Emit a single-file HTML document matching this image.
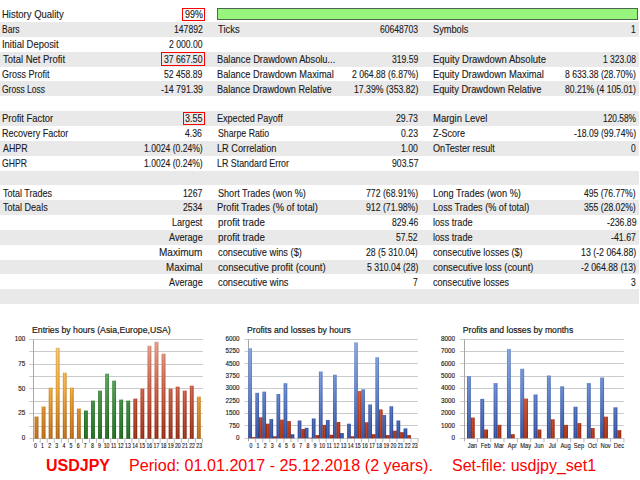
<!DOCTYPE html>
<html><head><meta charset="utf-8"><style>
html,body{margin:0;padding:0;background:#fff;}
body{width:640px;height:480px;overflow:hidden;position:relative;font-family:"Liberation Sans",sans-serif;color:#1b1b1b;}
.band{position:absolute;left:0;width:639px;background:#e9e9e9;}
.t{position:absolute;white-space:nowrap;font-size:10.2px;line-height:14.85px;height:14.85px;margin-top:1.2px;-webkit-text-stroke:0.12px #1b1b1b;}
.t{transform-origin:0 50%;}
/* 0.912 0.833 */
.box{position:absolute;border:1px solid #f00;box-sizing:border-box;}
.hq{position:absolute;left:217px;top:8.4px;width:421px;height:12px;background:#97f57e;border:1px solid #4d664d;box-sizing:border-box;}
.bot{position:absolute;top:456px;transform-origin:0 50%;font-size:15.6px;line-height:20px;color:#f00;white-space:nowrap;}
</style></head><body>

<div class="band" style="top:22.00px;height:14.85px"></div>
<div class="band" style="top:51.70px;height:14.85px"></div>
<div class="band" style="top:81.40px;height:14.85px"></div>
<div class="band" style="top:111.10px;height:14.85px"></div>
<div class="band" style="top:140.80px;height:14.85px"></div>
<div class="band" style="top:170.50px;height:14.85px"></div>
<div class="band" style="top:200.20px;height:14.85px"></div>
<div class="band" style="top:229.90px;height:14.85px"></div>
<div class="band" style="top:259.60px;height:14.85px"></div>
<div class="band" style="top:289.30px;height:14.85px"></div>
<div class="box" style="left:182px;top:8px;width:23px;height:13px"></div>
<div class="box" style="left:161px;top:52px;width:44px;height:14px"></div>
<div class="box" style="left:183px;top:112px;width:22px;height:13px"></div>
<div class="hq"></div>
<div class="t" style="left:2.04px;top:7.15px;transform:scaleX(0.9315)">History Quality</div>
<div class="t" style="left:2.12px;top:22.00px;transform:scaleX(0.8338)">Bars</div>
<div class="t" style="left:1.95px;top:36.85px;transform:scaleX(0.9248)">Initial Deposit</div>
<div class="t" style="left:2.61px;top:51.70px;transform:scaleX(0.9293)">Total Net Profit</div>
<div class="t" style="left:2.35px;top:66.55px;transform:scaleX(0.8809)">Gross Profit</div>
<div class="t" style="left:2.38px;top:81.40px;transform:scaleX(0.8324)">Gross Loss</div>
<div class="t" style="left:2.05px;top:111.10px;transform:scaleX(0.9236)">Profit Factor</div>
<div class="t" style="left:2.08px;top:125.95px;transform:scaleX(0.8870)">Recovery Factor</div>
<div class="t" style="left:2.80px;top:140.80px;transform:scaleX(0.8655)">AHPR</div>
<div class="t" style="left:2.37px;top:155.65px;transform:scaleX(0.8469)">GHPR</div>
<div class="t" style="left:2.62px;top:185.35px;transform:scaleX(0.8840)">Total Trades</div>
<div class="t" style="left:2.62px;top:200.20px;transform:scaleX(0.8862)">Total Deals</div>
<div class="t" style="left:184.60px;top:7.15px;transform:scaleX(0.8783)">99%</div>
<div class="t" style="left:173.85px;top:22.00px;transform:scaleX(0.8460)">147892</div>
<div class="t" style="left:168.97px;top:36.85px;transform:scaleX(0.8451)">2 000.00</div>
<div class="t" style="left:163.95px;top:51.70px;transform:scaleX(0.8493)">37 667.50</div>
<div class="t" style="left:164.36px;top:66.55px;transform:scaleX(0.8423)">52 458.89</div>
<div class="t" style="left:160.60px;top:81.40px;transform:scaleX(0.8612)">-14 791.39</div>
<div class="t" style="left:184.74px;top:111.10px;transform:scaleX(0.8779)">3.55</div>
<div class="t" style="left:185.23px;top:125.95px;transform:scaleX(0.8530)">4.36</div>
<div class="t" style="left:143.56px;top:140.80px;transform:scaleX(0.8428)">1.0024 (0.24%)</div>
<div class="t" style="left:143.56px;top:155.65px;transform:scaleX(0.8428)">1.0024 (0.24%)</div>
<div class="t" style="left:182.95px;top:185.35px;transform:scaleX(0.8497)">1267</div>
<div class="t" style="left:182.77px;top:200.20px;transform:scaleX(0.8501)">2534</div>
<div class="t" style="left:171.77px;top:215.05px;transform:scaleX(0.8899)">Largest</div>
<div class="t" style="left:168.70px;top:229.90px;transform:scaleX(0.8920)">Average</div>
<div class="t" style="left:159.20px;top:244.75px;transform:scaleX(0.9827)">Maximum</div>
<div class="t" style="left:166.22px;top:259.60px;transform:scaleX(0.9598)">Maximal</div>
<div class="t" style="left:168.70px;top:274.45px;transform:scaleX(0.8920)">Average</div>
<div class="t" style="left:218.01px;top:22.00px;transform:scaleX(0.9235)">Ticks</div>
<div class="t" style="left:217.46px;top:51.70px;transform:scaleX(0.9121)">Balance Drawdown Absolu...</div>
<div class="t" style="left:217.46px;top:66.55px;transform:scaleX(0.9088)">Balance Drawdown Maximal</div>
<div class="t" style="left:217.47px;top:81.40px;transform:scaleX(0.8996)">Balance Drawdown Relative</div>
<div class="t" style="left:217.48px;top:111.10px;transform:scaleX(0.8883)">Expected Payoff</div>
<div class="t" style="left:217.81px;top:125.95px;transform:scaleX(0.8593)">Sharpe Ratio</div>
<div class="t" style="left:217.46px;top:140.80px;transform:scaleX(0.9041)">LR Correlation</div>
<div class="t" style="left:217.49px;top:155.65px;transform:scaleX(0.8709)">LR Standard Error</div>
<div class="t" style="left:217.79px;top:185.35px;transform:scaleX(0.8917)">Short Trades (won %)</div>
<div class="t" style="left:217.45px;top:200.20px;transform:scaleX(0.9177)">Profit Trades (% of total)</div>
<div class="t" style="left:217.56px;top:215.05px;transform:scaleX(0.9615)">profit trade</div>
<div class="t" style="left:217.56px;top:229.90px;transform:scaleX(0.9615)">profit trade</div>
<div class="t" style="left:217.83px;top:244.75px;transform:scaleX(0.9087)">consecutive wins ($)</div>
<div class="t" style="left:217.81px;top:259.60px;transform:scaleX(0.9459)">consecutive profit (count)</div>
<div class="t" style="left:217.83px;top:274.45px;transform:scaleX(0.9156)">consecutive wins</div>
<div class="t" style="left:379.67px;top:22.00px;transform:scaleX(0.8410)">60648703</div>
<div class="t" style="left:391.56px;top:51.70px;transform:scaleX(0.8436)">319.59</div>
<div class="t" style="left:351.57px;top:66.55px;transform:scaleX(0.8494)">2 064.88 (6.87%)</div>
<div class="t" style="left:353.65px;top:81.40px;transform:scaleX(0.8540)">17.39% (353.82)</div>
<div class="t" style="left:396.06px;top:111.10px;transform:scaleX(0.8584)">29.73</div>
<div class="t" style="left:400.95px;top:125.95px;transform:scaleX(0.8569)">0.23</div>
<div class="t" style="left:401.05px;top:140.80px;transform:scaleX(0.8495)">1.00</div>
<div class="t" style="left:391.51px;top:155.65px;transform:scaleX(0.8498)">903.57</div>
<div class="t" style="left:365.86px;top:185.35px;transform:scaleX(0.8539)">772 (68.91%)</div>
<div class="t" style="left:365.91px;top:200.20px;transform:scaleX(0.8532)">912 (71.98%)</div>
<div class="t" style="left:391.61px;top:215.05px;transform:scaleX(0.8403)">829.46</div>
<div class="t" style="left:396.35px;top:229.90px;transform:scaleX(0.8461)">57.52</div>
<div class="t" style="left:366.26px;top:244.75px;transform:scaleX(0.8535)">28 (5 310.04)</div>
<div class="t" style="left:366.65px;top:259.60px;transform:scaleX(0.8470)">5 310.04 (28)</div>
<div class="t" style="left:413.21px;top:274.45px;transform:scaleX(0.8330)">7</div>
<div class="t" style="left:433.08px;top:22.00px;transform:scaleX(0.9060)">Symbols</div>
<div class="t" style="left:432.74px;top:51.70px;transform:scaleX(0.9321)">Equity Drawdown Absolute</div>
<div class="t" style="left:432.75px;top:66.55px;transform:scaleX(0.9244)">Equity Drawdown Maximal</div>
<div class="t" style="left:432.76px;top:81.40px;transform:scaleX(0.9112)">Equity Drawdown Relative</div>
<div class="t" style="left:432.74px;top:111.10px;transform:scaleX(0.9312)">Margin Level</div>
<div class="t" style="left:433.23px;top:125.95px;transform:scaleX(0.8874)">Z-Score</div>
<div class="t" style="left:433.09px;top:140.80px;transform:scaleX(0.8959)">OnTester result</div>
<div class="t" style="left:432.76px;top:185.35px;transform:scaleX(0.9081)">Long Trades (won %)</div>
<div class="t" style="left:432.77px;top:200.20px;transform:scaleX(0.8943)">Loss Trades (% of total)</div>
<div class="t" style="left:432.91px;top:215.05px;transform:scaleX(0.8957)">loss trade</div>
<div class="t" style="left:432.91px;top:229.90px;transform:scaleX(0.8957)">loss trade</div>
<div class="t" style="left:433.14px;top:244.75px;transform:scaleX(0.8893)">consecutive losses ($)</div>
<div class="t" style="left:433.13px;top:259.60px;transform:scaleX(0.9190)">consecutive loss (count)</div>
<div class="t" style="left:433.14px;top:274.45px;transform:scaleX(0.8897)">consecutive losses</div>
<div class="t" style="left:631.27px;top:22.00px;transform:scaleX(0.8330)">1</div>
<div class="t" style="left:603.06px;top:51.70px;transform:scaleX(0.8337)">1 323.08</div>
<div class="t" style="left:565.41px;top:66.55px;transform:scaleX(0.8452)">8 633.38 (28.70%)</div>
<div class="t" style="left:565.41px;top:81.40px;transform:scaleX(0.8452)">80.21% (4 105.01)</div>
<div class="t" style="left:602.57px;top:111.10px;transform:scaleX(0.8195)">120.58%</div>
<div class="t" style="left:573.71px;top:125.95px;transform:scaleX(0.8493)">-18.09 (99.74%)</div>
<div class="t" style="left:630.88px;top:140.80px;transform:scaleX(0.8330)">0</div>
<div class="t" style="left:584.23px;top:185.35px;transform:scaleX(0.8429)">495 (76.77%)</div>
<div class="t" style="left:584.05px;top:200.20px;transform:scaleX(0.8458)">355 (28.02%)</div>
<div class="t" style="left:606.61px;top:215.05px;transform:scaleX(0.8556)">-236.89</div>
<div class="t" style="left:611.30px;top:229.90px;transform:scaleX(0.8623)">-41.67</div>
<div class="t" style="left:581.04px;top:244.75px;transform:scaleX(0.8631)">13 (-2 064.88)</div>
<div class="t" style="left:581.31px;top:259.60px;transform:scaleX(0.8589)">-2 064.88 (13)</div>
<div class="t" style="left:631.42px;top:274.45px;transform:scaleX(0.8330)">3</div>
<svg width="640" height="480" style="position:absolute;left:0;top:0">
<defs>
<linearGradient id="gO" gradientUnits="userSpaceOnUse" x1="0" y1="338" x2="0" y2="439"><stop offset="0" stop-color="#fcc86a"/><stop offset="0.5" stop-color="#f2a42c"/><stop offset="1" stop-color="#bc6204"/></linearGradient>
<linearGradient id="gG" gradientUnits="userSpaceOnUse" x1="0" y1="338" x2="0" y2="439"><stop offset="0" stop-color="#7cc47c"/><stop offset="0.4" stop-color="#4a9e4a"/><stop offset="1" stop-color="#0e640e"/></linearGradient>
<linearGradient id="gR" gradientUnits="userSpaceOnUse" x1="0" y1="338" x2="0" y2="439"><stop offset="0" stop-color="#f0a08a"/><stop offset="0.5" stop-color="#cc5438"/><stop offset="1" stop-color="#961e02"/></linearGradient>
<linearGradient id="gB" gradientUnits="userSpaceOnUse" x1="0" y1="338" x2="0" y2="439"><stop offset="0" stop-color="#8aa9e8"/><stop offset="0.5" stop-color="#5a80d0"/><stop offset="1" stop-color="#24459e"/></linearGradient>
<linearGradient id="gL" gradientUnits="userSpaceOnUse" x1="0" y1="338" x2="0" y2="439"><stop offset="0" stop-color="#f48460"/><stop offset="0.5" stop-color="#d8502a"/><stop offset="1" stop-color="#a82000"/></linearGradient>
<linearGradient id="hE" x1="0" y1="0" x2="1" y2="0"><stop offset="0" stop-color="#000" stop-opacity=".10"/><stop offset="0.45" stop-color="#fff" stop-opacity=".14"/><stop offset="1" stop-color="#000" stop-opacity=".16"/></linearGradient>
</defs>
<line x1="29.10" y1="339.50" x2="202.90" y2="339.50" stroke="#c9cbcd" stroke-width="1.05"/>
<line x1="29.10" y1="351.50" x2="202.90" y2="351.50" stroke="#c9cbcd" stroke-width="1.05"/>
<line x1="29.10" y1="364.50" x2="202.90" y2="364.50" stroke="#c9cbcd" stroke-width="1.05"/>
<line x1="29.10" y1="376.50" x2="202.90" y2="376.50" stroke="#c9cbcd" stroke-width="1.05"/>
<line x1="29.10" y1="388.50" x2="202.90" y2="388.50" stroke="#c9cbcd" stroke-width="1.05"/>
<line x1="29.10" y1="401.50" x2="202.90" y2="401.50" stroke="#c9cbcd" stroke-width="1.05"/>
<line x1="29.10" y1="413.50" x2="202.90" y2="413.50" stroke="#c9cbcd" stroke-width="1.05"/>
<line x1="29.10" y1="426.50" x2="202.90" y2="426.50" stroke="#c9cbcd" stroke-width="1.05"/>
<line x1="29.10" y1="438.50" x2="202.90" y2="438.50" stroke="#c9cbcd" stroke-width="1.05"/>
<line x1="33.50" y1="339.50" x2="33.50" y2="441.80" stroke="#a8a8a8" stroke-width="1"/>
<rect x="34.60" y="416.57" width="3.8" height="22.23" fill="url(#gO)"/>
<rect x="34.60" y="416.57" width="3.8" height="22.23" fill="url(#hE)"/>
<line x1="40.16" y1="438.80" x2="40.16" y2="442.80" stroke="#a9a9a9" stroke-width="0.8"/>
<text transform="translate(35.40 447.60) scale(0.760 1)" font-size="6.80" text-anchor="middle" fill="#1a1a1a" font-family="Liberation Sans" font-weight="normal" stroke="#1a1a1a" stroke-width="0.15">0</text>
<rect x="41.66" y="406.60" width="3.8" height="32.20" fill="url(#gO)"/>
<rect x="41.66" y="406.60" width="3.8" height="32.20" fill="url(#hE)"/>
<line x1="47.21" y1="438.80" x2="47.21" y2="442.80" stroke="#a9a9a9" stroke-width="0.8"/>
<text transform="translate(42.52 447.60) scale(0.760 1)" font-size="6.80" text-anchor="middle" fill="#1a1a1a" font-family="Liberation Sans" font-weight="normal" stroke="#1a1a1a" stroke-width="0.15">1</text>
<rect x="48.71" y="387.65" width="3.8" height="51.15" fill="url(#gO)"/>
<rect x="48.71" y="387.65" width="3.8" height="51.15" fill="url(#hE)"/>
<line x1="54.27" y1="438.80" x2="54.27" y2="442.80" stroke="#a9a9a9" stroke-width="0.8"/>
<text transform="translate(49.64 447.60) scale(0.760 1)" font-size="6.80" text-anchor="middle" fill="#1a1a1a" font-family="Liberation Sans" font-weight="normal" stroke="#1a1a1a" stroke-width="0.15">2</text>
<rect x="55.77" y="347.77" width="3.8" height="91.03" fill="url(#gO)"/>
<rect x="55.77" y="347.77" width="3.8" height="91.03" fill="url(#hE)"/>
<line x1="61.33" y1="438.80" x2="61.33" y2="442.80" stroke="#a9a9a9" stroke-width="0.8"/>
<text transform="translate(56.76 447.60) scale(0.760 1)" font-size="6.80" text-anchor="middle" fill="#1a1a1a" font-family="Liberation Sans" font-weight="normal" stroke="#1a1a1a" stroke-width="0.15">3</text>
<rect x="62.83" y="372.70" width="3.8" height="66.10" fill="url(#gO)"/>
<rect x="62.83" y="372.70" width="3.8" height="66.10" fill="url(#hE)"/>
<line x1="68.39" y1="438.80" x2="68.39" y2="442.80" stroke="#a9a9a9" stroke-width="0.8"/>
<text transform="translate(63.88 447.60) scale(0.760 1)" font-size="6.80" text-anchor="middle" fill="#1a1a1a" font-family="Liberation Sans" font-weight="normal" stroke="#1a1a1a" stroke-width="0.15">4</text>
<rect x="69.89" y="387.65" width="3.8" height="51.15" fill="url(#gO)"/>
<rect x="69.89" y="387.65" width="3.8" height="51.15" fill="url(#hE)"/>
<line x1="75.44" y1="438.80" x2="75.44" y2="442.80" stroke="#a9a9a9" stroke-width="0.8"/>
<text transform="translate(71.00 447.60) scale(0.760 1)" font-size="6.80" text-anchor="middle" fill="#1a1a1a" font-family="Liberation Sans" font-weight="normal" stroke="#1a1a1a" stroke-width="0.15">5</text>
<rect x="76.94" y="408.59" width="3.8" height="30.21" fill="url(#gO)"/>
<rect x="76.94" y="408.59" width="3.8" height="30.21" fill="url(#hE)"/>
<line x1="82.50" y1="438.80" x2="82.50" y2="442.80" stroke="#a9a9a9" stroke-width="0.8"/>
<text transform="translate(78.12 447.60) scale(0.760 1)" font-size="6.80" text-anchor="middle" fill="#1a1a1a" font-family="Liberation Sans" font-weight="normal" stroke="#1a1a1a" stroke-width="0.15">6</text>
<rect x="84.00" y="410.58" width="3.8" height="28.22" fill="url(#gG)"/>
<rect x="84.00" y="410.58" width="3.8" height="28.22" fill="url(#hE)"/>
<line x1="89.56" y1="438.80" x2="89.56" y2="442.80" stroke="#a9a9a9" stroke-width="0.8"/>
<text transform="translate(85.24 447.60) scale(0.760 1)" font-size="6.80" text-anchor="middle" fill="#1a1a1a" font-family="Liberation Sans" font-weight="normal" stroke="#1a1a1a" stroke-width="0.15">7</text>
<rect x="91.06" y="400.61" width="3.8" height="38.19" fill="url(#gG)"/>
<rect x="91.06" y="400.61" width="3.8" height="38.19" fill="url(#hE)"/>
<line x1="96.61" y1="438.80" x2="96.61" y2="442.80" stroke="#a9a9a9" stroke-width="0.8"/>
<text transform="translate(92.36 447.60) scale(0.760 1)" font-size="6.80" text-anchor="middle" fill="#1a1a1a" font-family="Liberation Sans" font-weight="normal" stroke="#1a1a1a" stroke-width="0.15">8</text>
<rect x="98.11" y="390.64" width="3.8" height="48.16" fill="url(#gG)"/>
<rect x="98.11" y="390.64" width="3.8" height="48.16" fill="url(#hE)"/>
<line x1="103.67" y1="438.80" x2="103.67" y2="442.80" stroke="#a9a9a9" stroke-width="0.8"/>
<text transform="translate(99.48 447.60) scale(0.760 1)" font-size="6.80" text-anchor="middle" fill="#1a1a1a" font-family="Liberation Sans" font-weight="normal" stroke="#1a1a1a" stroke-width="0.15">9</text>
<rect x="105.17" y="373.69" width="3.8" height="65.11" fill="url(#gG)"/>
<rect x="105.17" y="373.69" width="3.8" height="65.11" fill="url(#hE)"/>
<line x1="110.73" y1="438.80" x2="110.73" y2="442.80" stroke="#a9a9a9" stroke-width="0.8"/>
<text transform="translate(106.60 447.60) scale(0.760 1)" font-size="6.80" text-anchor="middle" fill="#1a1a1a" font-family="Liberation Sans" font-weight="normal" stroke="#1a1a1a" stroke-width="0.15">10</text>
<rect x="112.23" y="380.67" width="3.8" height="58.13" fill="url(#gG)"/>
<rect x="112.23" y="380.67" width="3.8" height="58.13" fill="url(#hE)"/>
<line x1="117.78" y1="438.80" x2="117.78" y2="442.80" stroke="#a9a9a9" stroke-width="0.8"/>
<text transform="translate(113.72 447.60) scale(0.760 1)" font-size="6.80" text-anchor="middle" fill="#1a1a1a" font-family="Liberation Sans" font-weight="normal" stroke="#1a1a1a" stroke-width="0.15">11</text>
<rect x="119.28" y="399.62" width="3.8" height="39.18" fill="url(#gG)"/>
<rect x="119.28" y="399.62" width="3.8" height="39.18" fill="url(#hE)"/>
<line x1="124.84" y1="438.80" x2="124.84" y2="442.80" stroke="#a9a9a9" stroke-width="0.8"/>
<text transform="translate(120.84 447.60) scale(0.760 1)" font-size="6.80" text-anchor="middle" fill="#1a1a1a" font-family="Liberation Sans" font-weight="normal" stroke="#1a1a1a" stroke-width="0.15">12</text>
<rect x="126.34" y="400.61" width="3.8" height="38.19" fill="url(#gG)"/>
<rect x="126.34" y="400.61" width="3.8" height="38.19" fill="url(#hE)"/>
<line x1="131.90" y1="438.80" x2="131.90" y2="442.80" stroke="#a9a9a9" stroke-width="0.8"/>
<text transform="translate(127.96 447.60) scale(0.760 1)" font-size="6.80" text-anchor="middle" fill="#1a1a1a" font-family="Liberation Sans" font-weight="normal" stroke="#1a1a1a" stroke-width="0.15">13</text>
<rect x="133.40" y="398.62" width="3.8" height="40.18" fill="url(#gR)"/>
<rect x="133.40" y="398.62" width="3.8" height="40.18" fill="url(#hE)"/>
<line x1="138.96" y1="438.80" x2="138.96" y2="442.80" stroke="#a9a9a9" stroke-width="0.8"/>
<text transform="translate(135.08 447.60) scale(0.760 1)" font-size="6.80" text-anchor="middle" fill="#1a1a1a" font-family="Liberation Sans" font-weight="normal" stroke="#1a1a1a" stroke-width="0.15">14</text>
<rect x="140.46" y="388.65" width="3.8" height="50.15" fill="url(#gR)"/>
<rect x="140.46" y="388.65" width="3.8" height="50.15" fill="url(#hE)"/>
<line x1="146.01" y1="438.80" x2="146.01" y2="442.80" stroke="#a9a9a9" stroke-width="0.8"/>
<text transform="translate(142.20 447.60) scale(0.760 1)" font-size="6.80" text-anchor="middle" fill="#1a1a1a" font-family="Liberation Sans" font-weight="normal" stroke="#1a1a1a" stroke-width="0.15">15</text>
<rect x="147.51" y="345.78" width="3.8" height="93.02" fill="url(#gR)"/>
<rect x="147.51" y="345.78" width="3.8" height="93.02" fill="url(#hE)"/>
<line x1="153.07" y1="438.80" x2="153.07" y2="442.80" stroke="#a9a9a9" stroke-width="0.8"/>
<text transform="translate(149.32 447.60) scale(0.760 1)" font-size="6.80" text-anchor="middle" fill="#1a1a1a" font-family="Liberation Sans" font-weight="normal" stroke="#1a1a1a" stroke-width="0.15">16</text>
<rect x="154.57" y="341.79" width="3.8" height="97.01" fill="url(#gR)"/>
<rect x="154.57" y="341.79" width="3.8" height="97.01" fill="url(#hE)"/>
<line x1="160.13" y1="438.80" x2="160.13" y2="442.80" stroke="#a9a9a9" stroke-width="0.8"/>
<text transform="translate(156.44 447.60) scale(0.760 1)" font-size="6.80" text-anchor="middle" fill="#1a1a1a" font-family="Liberation Sans" font-weight="normal" stroke="#1a1a1a" stroke-width="0.15">17</text>
<rect x="161.63" y="353.75" width="3.8" height="85.05" fill="url(#gR)"/>
<rect x="161.63" y="353.75" width="3.8" height="85.05" fill="url(#hE)"/>
<line x1="167.18" y1="438.80" x2="167.18" y2="442.80" stroke="#a9a9a9" stroke-width="0.8"/>
<text transform="translate(163.56 447.60) scale(0.760 1)" font-size="6.80" text-anchor="middle" fill="#1a1a1a" font-family="Liberation Sans" font-weight="normal" stroke="#1a1a1a" stroke-width="0.15">18</text>
<rect x="168.68" y="388.65" width="3.8" height="50.15" fill="url(#gR)"/>
<rect x="168.68" y="388.65" width="3.8" height="50.15" fill="url(#hE)"/>
<line x1="174.24" y1="438.80" x2="174.24" y2="442.80" stroke="#a9a9a9" stroke-width="0.8"/>
<text transform="translate(170.68 447.60) scale(0.760 1)" font-size="6.80" text-anchor="middle" fill="#1a1a1a" font-family="Liberation Sans" font-weight="normal" stroke="#1a1a1a" stroke-width="0.15">19</text>
<rect x="175.74" y="386.66" width="3.8" height="52.14" fill="url(#gR)"/>
<rect x="175.74" y="386.66" width="3.8" height="52.14" fill="url(#hE)"/>
<line x1="181.30" y1="438.80" x2="181.30" y2="442.80" stroke="#a9a9a9" stroke-width="0.8"/>
<text transform="translate(177.80 447.60) scale(0.760 1)" font-size="6.80" text-anchor="middle" fill="#1a1a1a" font-family="Liberation Sans" font-weight="normal" stroke="#1a1a1a" stroke-width="0.15">20</text>
<rect x="182.80" y="390.64" width="3.8" height="48.16" fill="url(#gR)"/>
<rect x="182.80" y="390.64" width="3.8" height="48.16" fill="url(#hE)"/>
<line x1="188.35" y1="438.80" x2="188.35" y2="442.80" stroke="#a9a9a9" stroke-width="0.8"/>
<text transform="translate(184.92 447.60) scale(0.760 1)" font-size="6.80" text-anchor="middle" fill="#1a1a1a" font-family="Liberation Sans" font-weight="normal" stroke="#1a1a1a" stroke-width="0.15">21</text>
<rect x="189.85" y="385.66" width="3.8" height="53.14" fill="url(#gR)"/>
<rect x="189.85" y="385.66" width="3.8" height="53.14" fill="url(#hE)"/>
<line x1="195.41" y1="438.80" x2="195.41" y2="442.80" stroke="#a9a9a9" stroke-width="0.8"/>
<text transform="translate(192.04 447.60) scale(0.760 1)" font-size="6.80" text-anchor="middle" fill="#1a1a1a" font-family="Liberation Sans" font-weight="normal" stroke="#1a1a1a" stroke-width="0.15">22</text>
<rect x="196.91" y="396.63" width="3.8" height="42.17" fill="url(#gO)"/>
<rect x="196.91" y="396.63" width="3.8" height="42.17" fill="url(#hE)"/>
<line x1="202.47" y1="438.80" x2="202.47" y2="442.80" stroke="#a9a9a9" stroke-width="0.8"/>
<text transform="translate(199.16 447.60) scale(0.760 1)" font-size="6.80" text-anchor="middle" fill="#1a1a1a" font-family="Liberation Sans" font-weight="normal" stroke="#1a1a1a" stroke-width="0.15">23</text>
<text transform="translate(25.20 340.70) scale(0.930 1)" font-size="6.80" text-anchor="end" fill="#1a1a1a" font-family="Liberation Sans" font-weight="normal" stroke="#1a1a1a" stroke-width="0.15">100</text>
<text transform="translate(25.20 365.63) scale(0.930 1)" font-size="6.80" text-anchor="end" fill="#1a1a1a" font-family="Liberation Sans" font-weight="normal" stroke="#1a1a1a" stroke-width="0.15">75</text>
<text transform="translate(25.20 390.55) scale(0.930 1)" font-size="6.80" text-anchor="end" fill="#1a1a1a" font-family="Liberation Sans" font-weight="normal" stroke="#1a1a1a" stroke-width="0.15">50</text>
<text transform="translate(25.20 415.48) scale(0.930 1)" font-size="6.80" text-anchor="end" fill="#1a1a1a" font-family="Liberation Sans" font-weight="normal" stroke="#1a1a1a" stroke-width="0.15">25</text>
<text transform="translate(25.20 440.40) scale(0.930 1)" font-size="6.80" text-anchor="end" fill="#1a1a1a" font-family="Liberation Sans" font-weight="normal" stroke="#1a1a1a" stroke-width="0.15">0</text>
<text transform="translate(32.00 333.00) scale(0.935 1)" font-size="9.30" text-anchor="start" fill="#1a1a1a" font-family="Liberation Sans" font-weight="normal" stroke="#1a1a1a" stroke-width="0.20">Entries by hours (Asia,Europe,USA)</text>
<line x1="244.60" y1="339.50" x2="417.90" y2="339.50" stroke="#c9cbcd" stroke-width="1.05"/>
<line x1="244.60" y1="351.50" x2="417.90" y2="351.50" stroke="#c9cbcd" stroke-width="1.05"/>
<line x1="244.60" y1="363.50" x2="417.90" y2="363.50" stroke="#c9cbcd" stroke-width="1.05"/>
<line x1="244.60" y1="376.50" x2="417.90" y2="376.50" stroke="#c9cbcd" stroke-width="1.05"/>
<line x1="244.60" y1="388.50" x2="417.90" y2="388.50" stroke="#c9cbcd" stroke-width="1.05"/>
<line x1="244.60" y1="401.50" x2="417.90" y2="401.50" stroke="#c9cbcd" stroke-width="1.05"/>
<line x1="244.60" y1="413.50" x2="417.90" y2="413.50" stroke="#c9cbcd" stroke-width="1.05"/>
<line x1="244.60" y1="425.50" x2="417.90" y2="425.50" stroke="#c9cbcd" stroke-width="1.05"/>
<line x1="244.60" y1="438.50" x2="417.90" y2="438.50" stroke="#c9cbcd" stroke-width="1.05"/>
<line x1="248.50" y1="339.50" x2="248.50" y2="441.30" stroke="#a8a8a8" stroke-width="1"/>
<rect x="248.30" y="348.22" width="3.65" height="90.08" fill="url(#gB)"/>
<rect x="248.30" y="348.22" width="3.65" height="90.08" fill="url(#hE)"/>
<rect x="251.90" y="437.13" width="3.65" height="1.17" fill="url(#gL)"/>
<rect x="251.90" y="437.13" width="3.65" height="1.17" fill="url(#hE)"/>
<line x1="255.66" y1="438.30" x2="255.66" y2="442.30" stroke="#a9a9a9" stroke-width="0.8"/>
<text transform="translate(250.90 447.60) scale(0.760 1)" font-size="6.80" text-anchor="middle" fill="#1a1a1a" font-family="Liberation Sans" font-weight="normal" stroke="#1a1a1a" stroke-width="0.15">0</text>
<rect x="255.36" y="392.83" width="3.65" height="45.47" fill="url(#gB)"/>
<rect x="255.36" y="392.83" width="3.65" height="45.47" fill="url(#hE)"/>
<rect x="258.96" y="417.31" width="3.65" height="20.99" fill="url(#gL)"/>
<rect x="258.96" y="417.31" width="3.65" height="20.99" fill="url(#hE)"/>
<line x1="262.72" y1="438.30" x2="262.72" y2="442.30" stroke="#a9a9a9" stroke-width="0.8"/>
<text transform="translate(258.03 447.60) scale(0.760 1)" font-size="6.80" text-anchor="middle" fill="#1a1a1a" font-family="Liberation Sans" font-weight="normal" stroke="#1a1a1a" stroke-width="0.15">1</text>
<rect x="262.42" y="391.66" width="3.65" height="46.64" fill="url(#gB)"/>
<rect x="262.42" y="391.66" width="3.65" height="46.64" fill="url(#hE)"/>
<rect x="266.02" y="423.72" width="3.65" height="14.58" fill="url(#gL)"/>
<rect x="266.02" y="423.72" width="3.65" height="14.58" fill="url(#hE)"/>
<line x1="269.78" y1="438.30" x2="269.78" y2="442.30" stroke="#a9a9a9" stroke-width="0.8"/>
<text transform="translate(265.15 447.60) scale(0.760 1)" font-size="6.80" text-anchor="middle" fill="#1a1a1a" font-family="Liberation Sans" font-weight="normal" stroke="#1a1a1a" stroke-width="0.15">2</text>
<rect x="269.48" y="419.06" width="3.65" height="19.24" fill="url(#gB)"/>
<rect x="269.48" y="419.06" width="3.65" height="19.24" fill="url(#hE)"/>
<rect x="273.08" y="436.25" width="3.65" height="2.05" fill="url(#gL)"/>
<rect x="273.08" y="436.25" width="3.65" height="2.05" fill="url(#hE)"/>
<line x1="276.84" y1="438.30" x2="276.84" y2="442.30" stroke="#a9a9a9" stroke-width="0.8"/>
<text transform="translate(272.28 447.60) scale(0.760 1)" font-size="6.80" text-anchor="middle" fill="#1a1a1a" font-family="Liberation Sans" font-weight="normal" stroke="#1a1a1a" stroke-width="0.15">3</text>
<rect x="276.54" y="393.99" width="3.65" height="44.31" fill="url(#gB)"/>
<rect x="276.54" y="393.99" width="3.65" height="44.31" fill="url(#hE)"/>
<rect x="280.14" y="419.64" width="3.65" height="18.66" fill="url(#gL)"/>
<rect x="280.14" y="419.64" width="3.65" height="18.66" fill="url(#hE)"/>
<line x1="283.90" y1="438.30" x2="283.90" y2="442.30" stroke="#a9a9a9" stroke-width="0.8"/>
<text transform="translate(279.40 447.60) scale(0.760 1)" font-size="6.80" text-anchor="middle" fill="#1a1a1a" font-family="Liberation Sans" font-weight="normal" stroke="#1a1a1a" stroke-width="0.15">4</text>
<rect x="283.60" y="383.20" width="3.65" height="55.10" fill="url(#gB)"/>
<rect x="283.60" y="383.20" width="3.65" height="55.10" fill="url(#hE)"/>
<rect x="287.20" y="421.11" width="3.65" height="17.19" fill="url(#gL)"/>
<rect x="287.20" y="421.11" width="3.65" height="17.19" fill="url(#hE)"/>
<line x1="290.96" y1="438.30" x2="290.96" y2="442.30" stroke="#a9a9a9" stroke-width="0.8"/>
<text transform="translate(286.53 447.60) scale(0.760 1)" font-size="6.80" text-anchor="middle" fill="#1a1a1a" font-family="Liberation Sans" font-weight="normal" stroke="#1a1a1a" stroke-width="0.15">5</text>
<rect x="290.66" y="434.22" width="3.65" height="4.08" fill="url(#gB)"/>
<rect x="290.66" y="434.22" width="3.65" height="4.08" fill="url(#hE)"/>
<line x1="298.02" y1="438.30" x2="298.02" y2="442.30" stroke="#a9a9a9" stroke-width="0.8"/>
<text transform="translate(293.66 447.60) scale(0.760 1)" font-size="6.80" text-anchor="middle" fill="#1a1a1a" font-family="Liberation Sans" font-weight="normal" stroke="#1a1a1a" stroke-width="0.15">6</text>
<rect x="297.72" y="420.51" width="3.65" height="17.79" fill="url(#gB)"/>
<rect x="297.72" y="420.51" width="3.65" height="17.79" fill="url(#hE)"/>
<rect x="301.32" y="428.97" width="3.65" height="9.33" fill="url(#gL)"/>
<rect x="301.32" y="428.97" width="3.65" height="9.33" fill="url(#hE)"/>
<line x1="305.08" y1="438.30" x2="305.08" y2="442.30" stroke="#a9a9a9" stroke-width="0.8"/>
<text transform="translate(300.78 447.60) scale(0.760 1)" font-size="6.80" text-anchor="middle" fill="#1a1a1a" font-family="Liberation Sans" font-weight="normal" stroke="#1a1a1a" stroke-width="0.15">7</text>
<rect x="304.78" y="427.81" width="3.65" height="10.49" fill="url(#gB)"/>
<rect x="304.78" y="427.81" width="3.65" height="10.49" fill="url(#hE)"/>
<rect x="308.38" y="437.72" width="3.65" height="0.58" fill="url(#gL)"/>
<rect x="308.38" y="437.72" width="3.65" height="0.58" fill="url(#hE)"/>
<line x1="312.14" y1="438.30" x2="312.14" y2="442.30" stroke="#a9a9a9" stroke-width="0.8"/>
<text transform="translate(307.91 447.60) scale(0.760 1)" font-size="6.80" text-anchor="middle" fill="#1a1a1a" font-family="Liberation Sans" font-weight="normal" stroke="#1a1a1a" stroke-width="0.15">8</text>
<rect x="311.84" y="418.48" width="3.65" height="19.82" fill="url(#gB)"/>
<rect x="311.84" y="418.48" width="3.65" height="19.82" fill="url(#hE)"/>
<rect x="315.44" y="435.10" width="3.65" height="3.20" fill="url(#gL)"/>
<rect x="315.44" y="435.10" width="3.65" height="3.20" fill="url(#hE)"/>
<line x1="319.20" y1="438.30" x2="319.20" y2="442.30" stroke="#a9a9a9" stroke-width="0.8"/>
<text transform="translate(315.03 447.60) scale(0.760 1)" font-size="6.80" text-anchor="middle" fill="#1a1a1a" font-family="Liberation Sans" font-weight="normal" stroke="#1a1a1a" stroke-width="0.15">9</text>
<rect x="318.90" y="371.54" width="3.65" height="66.76" fill="url(#gB)"/>
<rect x="318.90" y="371.54" width="3.65" height="66.76" fill="url(#hE)"/>
<rect x="322.50" y="424.89" width="3.65" height="13.41" fill="url(#gL)"/>
<rect x="322.50" y="424.89" width="3.65" height="13.41" fill="url(#hE)"/>
<line x1="326.26" y1="438.30" x2="326.26" y2="442.30" stroke="#a9a9a9" stroke-width="0.8"/>
<text transform="translate(322.16 447.60) scale(0.760 1)" font-size="6.80" text-anchor="middle" fill="#1a1a1a" font-family="Liberation Sans" font-weight="normal" stroke="#1a1a1a" stroke-width="0.15">10</text>
<rect x="325.96" y="419.93" width="3.65" height="18.37" fill="url(#gB)"/>
<rect x="325.96" y="419.93" width="3.65" height="18.37" fill="url(#hE)"/>
<rect x="329.56" y="434.80" width="3.65" height="3.50" fill="url(#gL)"/>
<rect x="329.56" y="434.80" width="3.65" height="3.50" fill="url(#hE)"/>
<line x1="333.32" y1="438.30" x2="333.32" y2="442.30" stroke="#a9a9a9" stroke-width="0.8"/>
<text transform="translate(329.29 447.60) scale(0.760 1)" font-size="6.80" text-anchor="middle" fill="#1a1a1a" font-family="Liberation Sans" font-weight="normal" stroke="#1a1a1a" stroke-width="0.15">11</text>
<rect x="333.02" y="374.74" width="3.65" height="63.56" fill="url(#gB)"/>
<rect x="333.02" y="374.74" width="3.65" height="63.56" fill="url(#hE)"/>
<rect x="336.62" y="421.98" width="3.65" height="16.32" fill="url(#gL)"/>
<rect x="336.62" y="421.98" width="3.65" height="16.32" fill="url(#hE)"/>
<line x1="340.38" y1="438.30" x2="340.38" y2="442.30" stroke="#a9a9a9" stroke-width="0.8"/>
<text transform="translate(336.41 447.60) scale(0.760 1)" font-size="6.80" text-anchor="middle" fill="#1a1a1a" font-family="Liberation Sans" font-weight="normal" stroke="#1a1a1a" stroke-width="0.15">12</text>
<rect x="340.08" y="433.05" width="3.65" height="5.25" fill="url(#gB)"/>
<rect x="340.08" y="433.05" width="3.65" height="5.25" fill="url(#hE)"/>
<line x1="347.44" y1="438.30" x2="347.44" y2="442.30" stroke="#a9a9a9" stroke-width="0.8"/>
<text transform="translate(343.54 447.60) scale(0.760 1)" font-size="6.80" text-anchor="middle" fill="#1a1a1a" font-family="Liberation Sans" font-weight="normal" stroke="#1a1a1a" stroke-width="0.15">13</text>
<rect x="347.14" y="423.73" width="3.65" height="14.57" fill="url(#gB)"/>
<rect x="347.14" y="423.73" width="3.65" height="14.57" fill="url(#hE)"/>
<rect x="350.74" y="436.25" width="3.65" height="2.05" fill="url(#gL)"/>
<rect x="350.74" y="436.25" width="3.65" height="2.05" fill="url(#hE)"/>
<line x1="354.50" y1="438.30" x2="354.50" y2="442.30" stroke="#a9a9a9" stroke-width="0.8"/>
<text transform="translate(350.66 447.60) scale(0.760 1)" font-size="6.80" text-anchor="middle" fill="#1a1a1a" font-family="Liberation Sans" font-weight="normal" stroke="#1a1a1a" stroke-width="0.15">14</text>
<rect x="354.20" y="342.39" width="3.65" height="95.91" fill="url(#gB)"/>
<rect x="354.20" y="342.39" width="3.65" height="95.91" fill="url(#hE)"/>
<rect x="357.80" y="391.08" width="3.65" height="47.22" fill="url(#gL)"/>
<rect x="357.80" y="391.08" width="3.65" height="47.22" fill="url(#hE)"/>
<line x1="361.56" y1="438.30" x2="361.56" y2="442.30" stroke="#a9a9a9" stroke-width="0.8"/>
<text transform="translate(357.79 447.60) scale(0.760 1)" font-size="6.80" text-anchor="middle" fill="#1a1a1a" font-family="Liberation Sans" font-weight="normal" stroke="#1a1a1a" stroke-width="0.15">15</text>
<rect x="361.26" y="389.33" width="3.65" height="48.97" fill="url(#gB)"/>
<rect x="361.26" y="389.33" width="3.65" height="48.97" fill="url(#hE)"/>
<rect x="364.86" y="422.26" width="3.65" height="16.04" fill="url(#gL)"/>
<rect x="364.86" y="422.26" width="3.65" height="16.04" fill="url(#hE)"/>
<line x1="368.62" y1="438.30" x2="368.62" y2="442.30" stroke="#a9a9a9" stroke-width="0.8"/>
<text transform="translate(364.92 447.60) scale(0.760 1)" font-size="6.80" text-anchor="middle" fill="#1a1a1a" font-family="Liberation Sans" font-weight="normal" stroke="#1a1a1a" stroke-width="0.15">16</text>
<rect x="368.32" y="404.49" width="3.65" height="33.81" fill="url(#gB)"/>
<rect x="368.32" y="404.49" width="3.65" height="33.81" fill="url(#hE)"/>
<rect x="371.92" y="434.22" width="3.65" height="4.08" fill="url(#gL)"/>
<rect x="371.92" y="434.22" width="3.65" height="4.08" fill="url(#hE)"/>
<line x1="375.68" y1="438.30" x2="375.68" y2="442.30" stroke="#a9a9a9" stroke-width="0.8"/>
<text transform="translate(372.04 447.60) scale(0.760 1)" font-size="6.80" text-anchor="middle" fill="#1a1a1a" font-family="Liberation Sans" font-weight="normal" stroke="#1a1a1a" stroke-width="0.15">17</text>
<rect x="375.38" y="357.25" width="3.65" height="81.05" fill="url(#gB)"/>
<rect x="375.38" y="357.25" width="3.65" height="81.05" fill="url(#hE)"/>
<rect x="378.98" y="409.45" width="3.65" height="28.85" fill="url(#gL)"/>
<rect x="378.98" y="409.45" width="3.65" height="28.85" fill="url(#hE)"/>
<line x1="382.74" y1="438.30" x2="382.74" y2="442.30" stroke="#a9a9a9" stroke-width="0.8"/>
<text transform="translate(379.17 447.60) scale(0.760 1)" font-size="6.80" text-anchor="middle" fill="#1a1a1a" font-family="Liberation Sans" font-weight="normal" stroke="#1a1a1a" stroke-width="0.15">18</text>
<rect x="382.44" y="414.98" width="3.65" height="23.32" fill="url(#gB)"/>
<rect x="382.44" y="414.98" width="3.65" height="23.32" fill="url(#hE)"/>
<rect x="386.04" y="435.10" width="3.65" height="3.20" fill="url(#gL)"/>
<rect x="386.04" y="435.10" width="3.65" height="3.20" fill="url(#hE)"/>
<line x1="389.80" y1="438.30" x2="389.80" y2="442.30" stroke="#a9a9a9" stroke-width="0.8"/>
<text transform="translate(386.29 447.60) scale(0.760 1)" font-size="6.80" text-anchor="middle" fill="#1a1a1a" font-family="Liberation Sans" font-weight="normal" stroke="#1a1a1a" stroke-width="0.15">19</text>
<rect x="389.50" y="406.24" width="3.65" height="32.06" fill="url(#gB)"/>
<rect x="389.50" y="406.24" width="3.65" height="32.06" fill="url(#hE)"/>
<rect x="393.10" y="430.72" width="3.65" height="7.58" fill="url(#gL)"/>
<rect x="393.10" y="430.72" width="3.65" height="7.58" fill="url(#hE)"/>
<line x1="396.86" y1="438.30" x2="396.86" y2="442.30" stroke="#a9a9a9" stroke-width="0.8"/>
<text transform="translate(393.42 447.60) scale(0.760 1)" font-size="6.80" text-anchor="middle" fill="#1a1a1a" font-family="Liberation Sans" font-weight="normal" stroke="#1a1a1a" stroke-width="0.15">20</text>
<rect x="396.56" y="420.51" width="3.65" height="17.79" fill="url(#gB)"/>
<rect x="396.56" y="420.51" width="3.65" height="17.79" fill="url(#hE)"/>
<rect x="400.16" y="432.17" width="3.65" height="6.13" fill="url(#gL)"/>
<rect x="400.16" y="432.17" width="3.65" height="6.13" fill="url(#hE)"/>
<line x1="403.92" y1="438.30" x2="403.92" y2="442.30" stroke="#a9a9a9" stroke-width="0.8"/>
<text transform="translate(400.55 447.60) scale(0.760 1)" font-size="6.80" text-anchor="middle" fill="#1a1a1a" font-family="Liberation Sans" font-weight="normal" stroke="#1a1a1a" stroke-width="0.15">21</text>
<rect x="403.62" y="428.39" width="3.65" height="9.91" fill="url(#gB)"/>
<rect x="403.62" y="428.39" width="3.65" height="9.91" fill="url(#hE)"/>
<rect x="407.22" y="435.10" width="3.65" height="3.20" fill="url(#gL)"/>
<rect x="407.22" y="435.10" width="3.65" height="3.20" fill="url(#hE)"/>
<line x1="410.98" y1="438.30" x2="410.98" y2="442.30" stroke="#a9a9a9" stroke-width="0.8"/>
<text transform="translate(407.67 447.60) scale(0.760 1)" font-size="6.80" text-anchor="middle" fill="#1a1a1a" font-family="Liberation Sans" font-weight="normal" stroke="#1a1a1a" stroke-width="0.15">22</text>
<line x1="418.04" y1="438.30" x2="418.04" y2="442.30" stroke="#a9a9a9" stroke-width="0.8"/>
<text transform="translate(414.80 447.60) scale(0.760 1)" font-size="6.80" text-anchor="middle" fill="#1a1a1a" font-family="Liberation Sans" font-weight="normal" stroke="#1a1a1a" stroke-width="0.15">23</text>
<text transform="translate(239.50 340.80) scale(0.930 1)" font-size="6.80" text-anchor="end" fill="#1a1a1a" font-family="Liberation Sans" font-weight="normal" stroke="#1a1a1a" stroke-width="0.15">6000</text>
<text transform="translate(239.50 353.19) scale(0.930 1)" font-size="6.80" text-anchor="end" fill="#1a1a1a" font-family="Liberation Sans" font-weight="normal" stroke="#1a1a1a" stroke-width="0.15">5250</text>
<text transform="translate(239.50 365.58) scale(0.930 1)" font-size="6.80" text-anchor="end" fill="#1a1a1a" font-family="Liberation Sans" font-weight="normal" stroke="#1a1a1a" stroke-width="0.15">4500</text>
<text transform="translate(239.50 377.96) scale(0.930 1)" font-size="6.80" text-anchor="end" fill="#1a1a1a" font-family="Liberation Sans" font-weight="normal" stroke="#1a1a1a" stroke-width="0.15">3750</text>
<text transform="translate(239.50 390.35) scale(0.930 1)" font-size="6.80" text-anchor="end" fill="#1a1a1a" font-family="Liberation Sans" font-weight="normal" stroke="#1a1a1a" stroke-width="0.15">3000</text>
<text transform="translate(239.50 402.74) scale(0.930 1)" font-size="6.80" text-anchor="end" fill="#1a1a1a" font-family="Liberation Sans" font-weight="normal" stroke="#1a1a1a" stroke-width="0.15">2250</text>
<text transform="translate(239.50 415.12) scale(0.930 1)" font-size="6.80" text-anchor="end" fill="#1a1a1a" font-family="Liberation Sans" font-weight="normal" stroke="#1a1a1a" stroke-width="0.15">1500</text>
<text transform="translate(239.50 427.51) scale(0.930 1)" font-size="6.80" text-anchor="end" fill="#1a1a1a" font-family="Liberation Sans" font-weight="normal" stroke="#1a1a1a" stroke-width="0.15">750</text>
<text transform="translate(239.50 439.90) scale(0.930 1)" font-size="6.80" text-anchor="end" fill="#1a1a1a" font-family="Liberation Sans" font-weight="normal" stroke="#1a1a1a" stroke-width="0.15">0</text>
<text transform="translate(247.01 333.00) scale(0.932 1)" font-size="9.30" text-anchor="start" fill="#1a1a1a" font-family="Liberation Sans" font-weight="normal" stroke="#1a1a1a" stroke-width="0.20">Profits and losses by hours</text>
<line x1="460.10" y1="339.50" x2="623.90" y2="339.50" stroke="#c9cbcd" stroke-width="1.05"/>
<line x1="460.10" y1="351.50" x2="623.90" y2="351.50" stroke="#c9cbcd" stroke-width="1.05"/>
<line x1="460.10" y1="363.50" x2="623.90" y2="363.50" stroke="#c9cbcd" stroke-width="1.05"/>
<line x1="460.10" y1="376.50" x2="623.90" y2="376.50" stroke="#c9cbcd" stroke-width="1.05"/>
<line x1="460.10" y1="388.50" x2="623.90" y2="388.50" stroke="#c9cbcd" stroke-width="1.05"/>
<line x1="460.10" y1="401.50" x2="623.90" y2="401.50" stroke="#c9cbcd" stroke-width="1.05"/>
<line x1="460.10" y1="413.50" x2="623.90" y2="413.50" stroke="#c9cbcd" stroke-width="1.05"/>
<line x1="460.10" y1="425.50" x2="623.90" y2="425.50" stroke="#c9cbcd" stroke-width="1.05"/>
<line x1="460.10" y1="438.50" x2="623.90" y2="438.50" stroke="#c9cbcd" stroke-width="1.05"/>
<line x1="464.50" y1="339.50" x2="464.50" y2="441.30" stroke="#a8a8a8" stroke-width="1"/>
<rect x="467.00" y="376.09" width="3.85" height="62.21" fill="url(#gB)"/>
<rect x="467.00" y="376.09" width="3.85" height="62.21" fill="url(#hE)"/>
<rect x="470.85" y="417.56" width="3.85" height="20.74" fill="url(#gL)"/>
<rect x="470.85" y="417.56" width="3.85" height="20.74" fill="url(#hE)"/>
<line x1="477.42" y1="438.30" x2="477.42" y2="442.30" stroke="#a9a9a9" stroke-width="0.8"/>
<text transform="translate(472.40 447.80) scale(0.850 1)" font-size="6.80" text-anchor="middle" fill="#1a1a1a" font-family="Liberation Sans" font-weight="normal" stroke="#1a1a1a" stroke-width="0.12">Jan</text>
<rect x="480.32" y="398.88" width="3.85" height="39.42" fill="url(#gB)"/>
<rect x="480.32" y="398.88" width="3.85" height="39.42" fill="url(#hE)"/>
<rect x="484.17" y="429.54" width="3.85" height="8.76" fill="url(#gL)"/>
<rect x="484.17" y="429.54" width="3.85" height="8.76" fill="url(#hE)"/>
<line x1="490.74" y1="438.30" x2="490.74" y2="442.30" stroke="#a9a9a9" stroke-width="0.8"/>
<text transform="translate(485.72 447.80) scale(0.850 1)" font-size="6.80" text-anchor="middle" fill="#1a1a1a" font-family="Liberation Sans" font-weight="normal" stroke="#1a1a1a" stroke-width="0.12">Feb</text>
<rect x="493.64" y="383.10" width="3.85" height="55.20" fill="url(#gB)"/>
<rect x="493.64" y="383.10" width="3.85" height="55.20" fill="url(#hE)"/>
<rect x="497.49" y="424.87" width="3.85" height="13.43" fill="url(#gL)"/>
<rect x="497.49" y="424.87" width="3.85" height="13.43" fill="url(#hE)"/>
<line x1="504.06" y1="438.30" x2="504.06" y2="442.30" stroke="#a9a9a9" stroke-width="0.8"/>
<text transform="translate(499.04 447.80) scale(0.850 1)" font-size="6.80" text-anchor="middle" fill="#1a1a1a" font-family="Liberation Sans" font-weight="normal" stroke="#1a1a1a" stroke-width="0.12">Mar</text>
<rect x="506.96" y="348.93" width="3.85" height="89.37" fill="url(#gB)"/>
<rect x="506.96" y="348.93" width="3.85" height="89.37" fill="url(#hE)"/>
<rect x="510.81" y="434.22" width="3.85" height="4.08" fill="url(#gL)"/>
<rect x="510.81" y="434.22" width="3.85" height="4.08" fill="url(#hE)"/>
<line x1="517.38" y1="438.30" x2="517.38" y2="442.30" stroke="#a9a9a9" stroke-width="0.8"/>
<text transform="translate(512.36 447.80) scale(0.850 1)" font-size="6.80" text-anchor="middle" fill="#1a1a1a" font-family="Liberation Sans" font-weight="normal" stroke="#1a1a1a" stroke-width="0.12">Apr</text>
<rect x="520.28" y="368.79" width="3.85" height="69.51" fill="url(#gB)"/>
<rect x="520.28" y="368.79" width="3.85" height="69.51" fill="url(#hE)"/>
<rect x="524.13" y="398.58" width="3.85" height="39.72" fill="url(#gL)"/>
<rect x="524.13" y="398.58" width="3.85" height="39.72" fill="url(#hE)"/>
<line x1="530.70" y1="438.30" x2="530.70" y2="442.30" stroke="#a9a9a9" stroke-width="0.8"/>
<text transform="translate(525.68 447.80) scale(0.850 1)" font-size="6.80" text-anchor="middle" fill="#1a1a1a" font-family="Liberation Sans" font-weight="normal" stroke="#1a1a1a" stroke-width="0.12">May</text>
<rect x="533.60" y="394.48" width="3.85" height="43.82" fill="url(#gB)"/>
<rect x="533.60" y="394.48" width="3.85" height="43.82" fill="url(#hE)"/>
<rect x="537.45" y="429.54" width="3.85" height="8.76" fill="url(#gL)"/>
<rect x="537.45" y="429.54" width="3.85" height="8.76" fill="url(#hE)"/>
<line x1="544.02" y1="438.30" x2="544.02" y2="442.30" stroke="#a9a9a9" stroke-width="0.8"/>
<text transform="translate(539.00 447.80) scale(0.850 1)" font-size="6.80" text-anchor="middle" fill="#1a1a1a" font-family="Liberation Sans" font-weight="normal" stroke="#1a1a1a" stroke-width="0.12">Jun</text>
<rect x="546.92" y="375.51" width="3.85" height="62.79" fill="url(#gB)"/>
<rect x="546.92" y="375.51" width="3.85" height="62.79" fill="url(#hE)"/>
<rect x="550.77" y="419.32" width="3.85" height="18.98" fill="url(#gL)"/>
<rect x="550.77" y="419.32" width="3.85" height="18.98" fill="url(#hE)"/>
<line x1="557.34" y1="438.30" x2="557.34" y2="442.30" stroke="#a9a9a9" stroke-width="0.8"/>
<text transform="translate(552.32 447.80) scale(0.850 1)" font-size="6.80" text-anchor="middle" fill="#1a1a1a" font-family="Liberation Sans" font-weight="normal" stroke="#1a1a1a" stroke-width="0.12">Jul</text>
<rect x="560.24" y="386.32" width="3.85" height="51.98" fill="url(#gB)"/>
<rect x="560.24" y="386.32" width="3.85" height="51.98" fill="url(#hE)"/>
<rect x="564.09" y="424.87" width="3.85" height="13.43" fill="url(#gL)"/>
<rect x="564.09" y="424.87" width="3.85" height="13.43" fill="url(#hE)"/>
<line x1="570.66" y1="438.30" x2="570.66" y2="442.30" stroke="#a9a9a9" stroke-width="0.8"/>
<text transform="translate(565.64 447.80) scale(0.850 1)" font-size="6.80" text-anchor="middle" fill="#1a1a1a" font-family="Liberation Sans" font-weight="normal" stroke="#1a1a1a" stroke-width="0.12">Aug</text>
<rect x="573.56" y="406.76" width="3.85" height="31.54" fill="url(#gB)"/>
<rect x="573.56" y="406.76" width="3.85" height="31.54" fill="url(#hE)"/>
<rect x="577.41" y="423.11" width="3.85" height="15.19" fill="url(#gL)"/>
<rect x="577.41" y="423.11" width="3.85" height="15.19" fill="url(#hE)"/>
<line x1="583.98" y1="438.30" x2="583.98" y2="442.30" stroke="#a9a9a9" stroke-width="0.8"/>
<text transform="translate(578.96 447.80) scale(0.850 1)" font-size="6.80" text-anchor="middle" fill="#1a1a1a" font-family="Liberation Sans" font-weight="normal" stroke="#1a1a1a" stroke-width="0.12">Sep</text>
<rect x="586.88" y="383.10" width="3.85" height="55.20" fill="url(#gB)"/>
<rect x="586.88" y="383.10" width="3.85" height="55.20" fill="url(#hE)"/>
<rect x="590.73" y="428.07" width="3.85" height="10.23" fill="url(#gL)"/>
<rect x="590.73" y="428.07" width="3.85" height="10.23" fill="url(#hE)"/>
<line x1="597.30" y1="438.30" x2="597.30" y2="442.30" stroke="#a9a9a9" stroke-width="0.8"/>
<text transform="translate(592.28 447.80) scale(0.850 1)" font-size="6.80" text-anchor="middle" fill="#1a1a1a" font-family="Liberation Sans" font-weight="normal" stroke="#1a1a1a" stroke-width="0.12">Oct</text>
<rect x="600.20" y="377.55" width="3.85" height="60.75" fill="url(#gB)"/>
<rect x="600.20" y="377.55" width="3.85" height="60.75" fill="url(#hE)"/>
<rect x="604.05" y="416.69" width="3.85" height="21.61" fill="url(#gL)"/>
<rect x="604.05" y="416.69" width="3.85" height="21.61" fill="url(#hE)"/>
<line x1="610.62" y1="438.30" x2="610.62" y2="442.30" stroke="#a9a9a9" stroke-width="0.8"/>
<text transform="translate(605.60 447.80) scale(0.850 1)" font-size="6.80" text-anchor="middle" fill="#1a1a1a" font-family="Liberation Sans" font-weight="normal" stroke="#1a1a1a" stroke-width="0.12">Nov</text>
<rect x="613.52" y="407.34" width="3.85" height="30.96" fill="url(#gB)"/>
<rect x="613.52" y="407.34" width="3.85" height="30.96" fill="url(#hE)"/>
<rect x="617.37" y="430.12" width="3.85" height="8.18" fill="url(#gL)"/>
<rect x="617.37" y="430.12" width="3.85" height="8.18" fill="url(#hE)"/>
<line x1="623.94" y1="438.30" x2="623.94" y2="442.30" stroke="#a9a9a9" stroke-width="0.8"/>
<text transform="translate(618.92 447.80) scale(0.850 1)" font-size="6.80" text-anchor="middle" fill="#1a1a1a" font-family="Liberation Sans" font-weight="normal" stroke="#1a1a1a" stroke-width="0.12">Dec</text>
<text transform="translate(455.00 340.70) scale(0.930 1)" font-size="6.80" text-anchor="end" fill="#1a1a1a" font-family="Liberation Sans" font-weight="normal" stroke="#1a1a1a" stroke-width="0.15">8000</text>
<text transform="translate(455.00 353.11) scale(0.930 1)" font-size="6.80" text-anchor="end" fill="#1a1a1a" font-family="Liberation Sans" font-weight="normal" stroke="#1a1a1a" stroke-width="0.15">7000</text>
<text transform="translate(455.00 365.52) scale(0.930 1)" font-size="6.80" text-anchor="end" fill="#1a1a1a" font-family="Liberation Sans" font-weight="normal" stroke="#1a1a1a" stroke-width="0.15">6000</text>
<text transform="translate(455.00 377.94) scale(0.930 1)" font-size="6.80" text-anchor="end" fill="#1a1a1a" font-family="Liberation Sans" font-weight="normal" stroke="#1a1a1a" stroke-width="0.15">5000</text>
<text transform="translate(455.00 390.35) scale(0.930 1)" font-size="6.80" text-anchor="end" fill="#1a1a1a" font-family="Liberation Sans" font-weight="normal" stroke="#1a1a1a" stroke-width="0.15">4000</text>
<text transform="translate(455.00 402.76) scale(0.930 1)" font-size="6.80" text-anchor="end" fill="#1a1a1a" font-family="Liberation Sans" font-weight="normal" stroke="#1a1a1a" stroke-width="0.15">3000</text>
<text transform="translate(455.00 415.18) scale(0.930 1)" font-size="6.80" text-anchor="end" fill="#1a1a1a" font-family="Liberation Sans" font-weight="normal" stroke="#1a1a1a" stroke-width="0.15">2000</text>
<text transform="translate(455.00 427.59) scale(0.930 1)" font-size="6.80" text-anchor="end" fill="#1a1a1a" font-family="Liberation Sans" font-weight="normal" stroke="#1a1a1a" stroke-width="0.15">1000</text>
<text transform="translate(455.00 440.00) scale(0.930 1)" font-size="6.80" text-anchor="end" fill="#1a1a1a" font-family="Liberation Sans" font-weight="normal" stroke="#1a1a1a" stroke-width="0.15">0</text>
<text transform="translate(462.81 333.00) scale(0.930 1)" font-size="9.30" text-anchor="start" fill="#1a1a1a" font-family="Liberation Sans" font-weight="normal" stroke="#1a1a1a" stroke-width="0.20">Profits and losses by months</text>
</svg>
<div class="bot" style="left:45.5px;font-weight:bold;transform:scaleX(1.025)">USDJPY</div>
<div class="bot" style="left:129.3px;transform:scaleX(1.034)">Period: 01.01.2017 - 25.12.2018 (2 years).</div>
<div class="bot" style="left:451.8px;transform:scaleX(1.026)">Set-file: usdjpy_set1</div>
</body></html>
